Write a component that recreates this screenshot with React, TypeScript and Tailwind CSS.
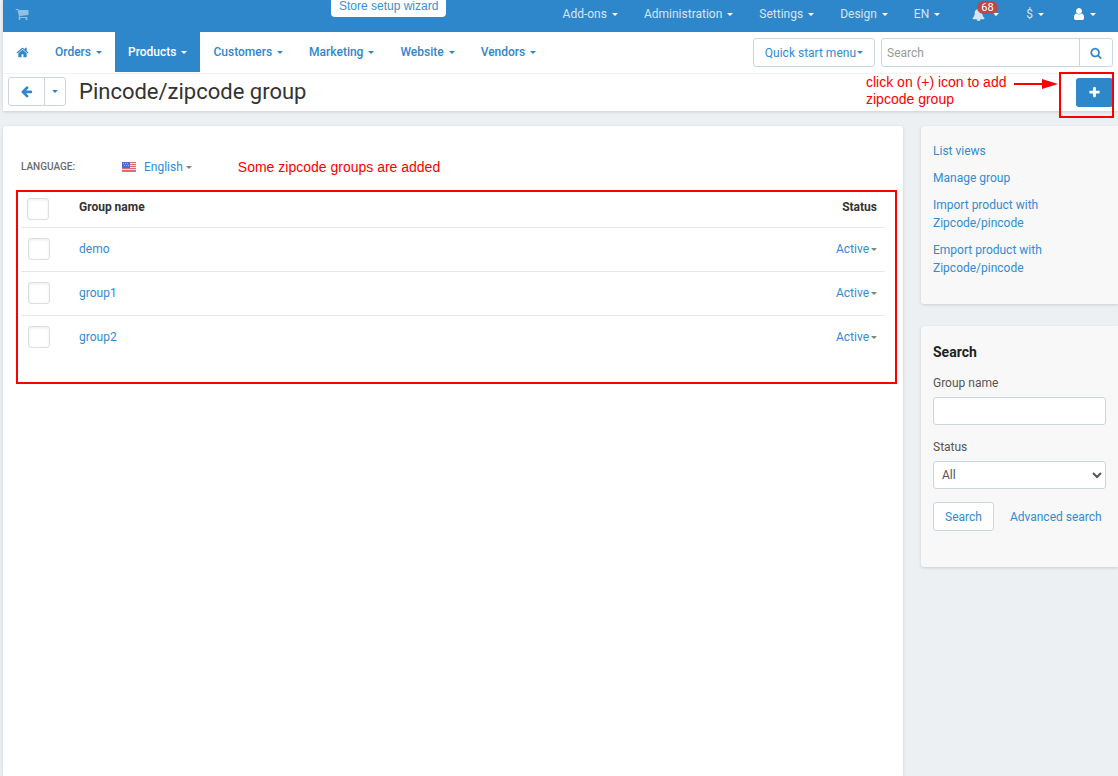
import React from "react";

type IconProps = { d: string; className?: string };

function Icon({ d, className }: IconProps) {
  return (
    <svg viewBox="0 0 1792 1792" fill="currentColor" aria-hidden="true" className={className}>
      <path d={d} />
    </svg>
  );
}

const CART =
  "M704 1536q0 52-38 90t-90 38-90-38-38-90 38-90 90-38 90 38 38 90zm896 0q0 52-38 90t-90 38-90-38-38-90 38-90 90-38 90 38 38 90zm128-1088v512q0 24-16.5 42.5t-40.5 21.5l-1044 122q13 60 13 70 0 16-24 64h920q26 0 45 19t19 45-19 45-45 19h-1024q-26 0-45-19t-19-45q0-11 8-31.5t16-36 21.5-40 15.5-29.5l-177-823h-204q-26 0-45-19t-19-45 19-45 45-19h256q16 0 28.5 6.5t19.5 15.5 13 24.5 8 26 5.5 29.5 4.5 26h1201q26 0 45 19t19 45z";
const HOME =
  "M1472 992v480q0 26-19 45t-45 19h-384v-384h-256v384h-384q-26 0-45-19t-19-45v-480q0-1 .5-3t.5-3l575-474 575 474q1 2 1 6zm223-69l-62 74q-8 9-21 11h-3q-13 0-21-7l-692-577-692 577q-12 8-24 7-13-2-21-11l-62-74q-8-10-7-23.5t11-21.5l719-599q32-26 76-26t76 26l244 204v-195q0-14 9-23t23-9h192q14 0 23 9t9 23v408l219 182q10 8 11 21.5t-7 23.5z";
const ARROW_LEFT =
  "M1664 896v128q0 53-32.5 90.5t-84.5 37.5h-704l293 294q38 36 38 90t-38 90l-75 76q-37 37-90 37-52 0-91-37l-651-652q-37-37-37-90 0-52 37-91l651-650q38-38 91-38 52 0 90 38l75 74q38 38 38 91t-38 91l-293 293h704q52 0 84.5 37.5t32.5 90.5z";
const SEARCH =
  "M1216 832q0-185-131.5-316.5t-316.5-131.5-316.5 131.5-131.5 316.5 131.5 316.5 316.5 131.5 316.5-131.5 131.5-316.5zm512 832q0 52-38 90t-90 38q-54 0-90-38l-343-342q-179 124-399 124-143 0-273.5-55.5t-225-150-150-225-55.5-273.5 55.5-273.5 150-225 225-150 273.5-55.5 273.5 55.5 225 150 150 225 55.5 273.5q0 220-124 399l343 343q37 37 37 90z";
const PLUS =
  "M1600 736v192q0 40-28 68t-68 28h-416v416q0 40-28 68t-68 28h-192q-40 0-68-28t-28-68v-416h-416q-40 0-68-28t-28-68v-192q0-40 28-68t68-28h416v-416q0-40 28-68t68-28h192q40 0 68 28t28 68v416h416q40 0 68 28t28 68z";
const USER =
  "M1536 1399q0 109-62.5 187t-150.5 78h-854q-88 0-150.5-78t-62.5-187q0-85 8.5-160.5t31.5-152 58.5-131 94-89 134.5-34.5q131 128 313 128t313-128q76 0 134.5 34.5t94 89 58.5 131 31.5 152 8.5 160.5zm-256-887q0 159-112.5 271.5t-271.5 112.5-271.5-112.5-112.5-271.5 112.5-271.5 271.5-112.5 271.5 112.5 112.5 271.5z";
const BELL =
  "M912 1696q0-16-16-16-59 0-101.5-42.5t-42.5-101.5q0-16-16-16t-16 16q0 73 51.5 124.5t124.5 51.5q16 0 16-16zm816-288q0 52-38 90t-90 38h-448q0 106-75 181t-181 75-181-75-75-181h-448q-52 0-90-38t-38-90q50-42 91-88t85-119.5 74.5-158.5 50-206 19.5-260q0-152 117-282.5t307-158.5q-8-19-8-39 0-40 28-68t68-28 68 28 28 68q0 20-8 39 190 28 307 158.5t117 282.5q0 139 19.5 260t50 206 74.5 158.5 85 119.5 91 88z";

function Caret({ className = "" }: { className?: string }) {
  return (
    <svg viewBox="0 0 6 3" fill="currentColor" aria-hidden="true" className={`h-[3px] w-[6px] shrink-0 ${className}`}>
      <path d="M0 0h6L3 3z" />
    </svg>
  );
}

function Flag() {
  return (
    <svg viewBox="0 0 14 10" role="img" aria-label="US flag" className="h-[10px] w-[14px]">
      <rect width="14" height="10" fill="#f6dcdc" />
      <g fill="#e2696b">
        <rect width="14" height="1" />
        <rect y="2" width="14" height="1" />
        <rect y="4" width="14" height="1" />
        <rect y="6" width="14" height="1" />
        <rect y="8" width="14" height="1" />
      </g>
      <rect y="9" width="14" height="1" fill="#b9797f" />
      <rect width="8" height="6" fill="#4a6ed0" />
      <g fill="#a3b9ee">
        <rect x="1" y="1" width="1" height="1" />
        <rect x="3" y="1" width="1" height="1" />
        <rect x="5" y="1" width="1" height="1" />
        <rect x="2" y="3" width="1" height="1" />
        <rect x="4" y="3" width="1" height="1" />
        <rect x="6" y="3" width="1" height="1" />
      </g>
    </svg>
  );
}

function TopBar() {
  return (
    <header className="relative flex h-8 items-start justify-between bg-[#2f87cb] pr-[22px] pl-[12px] text-[#d3e6f5]">
      <a href="#storefront" aria-label="Storefront" className="pt-[7px] text-[#8fc0e6]">
        <Icon d={CART} className="h-[14px] w-[14px]" />
      </a>
      <a
        href="#wizard"
        className="absolute top-0 left-[328px] flex h-[17px] items-center rounded-b-[4px] bg-white px-2 pb-[5px] font-['Liberation_Sans',sans-serif] text-[12px] leading-4 text-[#3a8fd0]"
      >
        Store setup wizard
      </a>
      <nav aria-label="Settings" className="flex h-7 items-center gap-[26px]">
        {["Add-ons", "Administration", "Settings", "Design", "EN"].map((t) => (
          <button key={t} type="button" className="flex items-center gap-[5px]">
            {t}
            <Caret className="text-white" />
          </button>
        ))}
        <button type="button" aria-label="68 notifications" className="relative ml-[6px] flex items-center gap-2">
          <Icon d={BELL} className="h-[13px] w-[13px]" />
          <Caret className="text-white" />
          <span className="absolute -top-[7px] left-[5px] rounded-full bg-[#b94a48] px-1 text-[11px] leading-[13px] text-white">
            68
          </span>
        </button>
        <button type="button" className="ml-px flex items-center gap-[5px]">
          $
          <Caret className="text-white" />
        </button>
        <button type="button" aria-label="Account" className="ml-[2px] flex items-center gap-1 text-white">
          <Icon d={USER} className="h-[14px] w-[14px]" />
          <Caret />
        </button>
      </nav>
    </header>
  );
}

function MainNav() {
  return (
    <div className="flex h-[41px] justify-between pr-[5px]">
      <nav aria-label="Main" className="flex h-10 font-medium text-[#2f87cb]">
        <a href="#home" aria-label="Home" className="flex items-center px-[13px]">
          <Icon d={HOME} className="h-[13px] w-[13px]" />
        </a>
        {["Orders", "Products", "Customers", "Marketing", "Website", "Vendors"].map((t) => (
          <button
            key={t}
            type="button"
            className={
              t === "Products"
                ? "flex items-center gap-[5px] bg-[#2f87cb] px-[13px] text-white"
                : "flex items-center gap-[5px] px-[13px]"
            }
          >
            {t}
            <Caret />
          </button>
        ))}
      </nav>
      <div className="flex items-start gap-[6px] pt-[6px]">
        <button
          type="button"
          className="flex h-[29px] items-center gap-px rounded-[3px] border border-[#ccd6df] px-[11px] text-[#318cd1]"
        >
          Quick start menu
          <Caret />
        </button>
        <form className="flex h-[29px]" onSubmit={(e) => e.preventDefault()}>
          <input
            type="search"
            aria-label="Search"
            placeholder="Search"
            className="w-[199px] rounded-l-[3px] border border-[#ccd6df] px-[5px] placeholder:text-[#999]"
          />
          <button
            type="submit"
            aria-label="Submit search"
            className="-ml-px flex w-[34px] items-center justify-center rounded-r-[3px] border border-[#ccd6df] text-[#2f87cb]"
          >
            <Icon d={SEARCH} className="h-3 w-3" />
          </button>
        </form>
      </div>
    </div>
  );
}

function TitleBar() {
  return (
    <div className="relative flex h-[38px] items-start justify-between border-t border-[#f1f2f4] pt-[3px] pl-[5px]">
      <div className="flex items-center">
        <a
          href="#back"
          aria-label="Back"
          className="flex h-[29px] w-[37px] items-center justify-center rounded-l-[3px] border border-[#ccd6df] text-[#2f87cb]"
        >
          <Icon d={ARROW_LEFT} className="h-[13px] w-[13px]" />
        </a>
        <button
          type="button"
          aria-label="History"
          className="-ml-px flex h-[29px] w-[22px] items-center justify-center rounded-r-[3px] border border-[#ccd6df] text-[#2f87cb]"
        >
          <Caret />
        </button>
        <h1 className="ml-[13px] text-[22px] leading-7 text-[#333]">Pincode/zipcode group</h1>
      </div>
      <div className="flex pt-px pr-[5px]">
        <button
          type="button"
          aria-label="Add group"
          className="flex h-[29px] w-[37px] items-center justify-center rounded-[3px] bg-[#2f87cb] text-white"
        >
          <Icon d={PLUS} className="h-[13px] w-[13px]" />
        </button>
      </div>
      <p className="absolute top-0 right-[100px] w-[152px] font-['Liberation_Sans',sans-serif] text-[14px] leading-[17px] text-[#fb0000]">
        click on (+) icon to add zipcode group
      </p>
      <svg viewBox="0 0 44 12" aria-hidden="true" className="absolute top-1 right-[60px] h-3 w-11 text-[#fb0000]">
        <path d="M0 6h30" stroke="currentColor" strokeWidth="2" />
        <path d="M28 1l16 5-16 5z" fill="currentColor" />
      </svg>
      <div className="pointer-events-none absolute -top-[2px] right-1 h-[46px] w-[55px] border-2 border-[#fb0000]" />
    </div>
  );
}

const boxClass =
  "block h-[22px] w-[22px] appearance-none rounded-[3px] border border-[#dedede] bg-white shadow-[inset_0_1px_3px_rgba(0,0,0,0.08)]";

function GroupTable() {
  return (
    <div className="border-2 border-[#fb0000] pr-[10px] pb-[23px] pl-[3px]">
      <table className="w-full border-collapse text-left">
        <thead>
          <tr className="h-[35px] border-b border-[#e8e8e8] text-[#333]">
            <th className="w-[58px] pl-[6px]">
              <input type="checkbox" aria-label="Select all" className={boxClass} />
            </th>
            <th className="pb-1 font-bold">Group name</th>
            <th className="pr-2 pb-1 text-right font-bold">Status</th>
          </tr>
        </thead>
        <tbody>
          {["demo", "group1", "group2"].map((name) => (
            <tr key={name} className="h-11 border-b border-[#e8e8e8] last:border-b-0">
              <td className="pl-[7px]">
                <input type="checkbox" aria-label={`Select ${name}`} className={boxClass} />
              </td>
              <td>
                <a href={`#${name}`} className="text-[#318cd1]">
                  {name}
                </a>
              </td>
              <td className="pr-2">
                <button type="button" className="ml-auto flex items-center gap-[2px] text-[#318cd1]">
                  Active
                  <Caret className="text-[#808080]" />
                </button>
              </td>
            </tr>
          ))}
        </tbody>
      </table>
    </div>
  );
}

const cardShadow = "shadow-[0_1px_3px_rgba(0,0,0,0.14)]";

function Sidebar() {
  return (
    <aside className="flex w-[197px] shrink-0 flex-col gap-[22px]">
      <nav aria-label="Group actions" className={`rounded-l-[3px] bg-[#f8f8f8] px-3 pt-4 pb-[27px] ${cardShadow}`}>
        <ul className="flex flex-col gap-[9px] leading-[18px] text-[#318cd1]">
          {["List views", "Manage group", "Import product with Zipcode/pincode", "Emport product with Zipcode/pincode"].map(
            (t) => (
              <li key={t} className="w-[130px]">
                <a href="#action">{t}</a>
              </li>
            ),
          )}
        </ul>
      </nav>
      <section className={`rounded-l-[3px] bg-[#f8f8f8] px-3 pt-4 pb-9 ${cardShadow}`}>
        <h2 className="text-[14px] leading-5 font-bold text-[#222]">Search</h2>
        <form className="mt-3 flex flex-col" onSubmit={(e) => e.preventDefault()}>
          <label htmlFor="group-name" className="leading-[18px] text-[#555]">
            Group name
          </label>
          <input
            id="group-name"
            type="text"
            className="mt-[5px] h-7 rounded-[3px] border border-[#ccd6df] bg-white px-2"
          />
          <label htmlFor="status" className="mt-[13px] leading-[18px] text-[#555]">
            Status
          </label>
          <select
            id="status"
            className="mt-[5px] h-7 rounded-[3px] border border-[#ccd6df] bg-white pl-1 text-[#555]"
          >
            <option>All</option>
            <option>Active</option>
            <option>Disabled</option>
          </select>
          <div className="mt-[13px] flex items-center gap-4 text-[#318cd1]">
            <button type="submit" className="h-[29px] rounded-[3px] border border-[#ccd6df] bg-white px-[11px]">
              Search
            </button>
            <a href="#advanced" className="whitespace-nowrap">
              Advanced search
            </a>
          </div>
        </form>
      </section>
    </aside>
  );
}

export default function App() {
  return (
    <div className="flex min-h-screen flex-col bg-[#ecf0f3] pl-[3px] font-['Roboto',sans-serif] text-[12px] leading-4">
      <div className="bg-white shadow-[0_1px_3px_rgba(0,0,0,0.14)]">
        <TopBar />
        <MainNav />
        <TitleBar />
      </div>
      <div className="mt-[15px] flex flex-1 gap-[18px]">
        <main className={`min-w-0 flex-1 rounded-t-[3px] bg-white pt-[31px] pr-[6px] pl-[13px] ${cardShadow}`}>
          <div className="mb-[13px] flex h-5 items-center">
            <span className="w-[106px] pl-[5px] text-[10px] font-medium text-[#6b6b6b]">LANGUAGE:</span>
            <button type="button" className="flex items-center text-[#318cd1]">
              <Flag />
              <span className="ml-2">English</span>
              <Caret className="ml-[3px] text-[#808080]" />
            </button>
            <p className="ml-[46px] font-['Liberation_Sans',sans-serif] text-[14px] text-[#fb0000]">
              Some zipcode groups are added
            </p>
          </div>
          <GroupTable />
        </main>
        <Sidebar />
      </div>
    </div>
  );
}
